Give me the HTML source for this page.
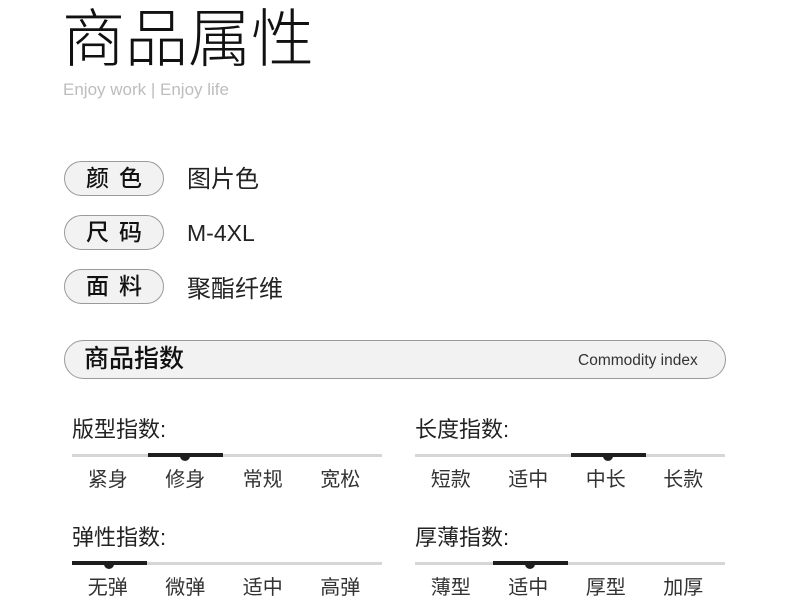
<!DOCTYPE html>
<html><head><meta charset="utf-8"><style>
*{margin:0;padding:0;box-sizing:border-box}
body{width:790px;height:614px;background:#fff;position:relative;overflow:hidden;font-family:"Liberation Sans","Noto Sans CJK SC",sans-serif;color:#222}
.a{position:absolute;white-space:nowrap}
.pill{position:absolute;left:64px;width:100px;height:35px;border:1px solid #9a9a9a;border-radius:18px;background:#f2f2f2;font-size:23px;font-weight:500;text-align:center;line-height:33px;letter-spacing:10px;padding-left:10px;color:#111}
.val{position:absolute;left:187px;font-size:24px;line-height:30px;color:#222}
.idx{position:absolute;width:310px;height:80px}
.idx .lbl{position:absolute;left:0;top:0;font-size:22px;line-height:26px;color:#222}
.idx .bar{position:absolute;left:0;top:37px;width:310px;height:3px;background:#d6d6d6}
.idx .on{position:absolute;top:36px;width:75px;height:4px;background:#1e1e1e}
.idx .on:after{content:"";position:absolute;left:32px;top:3px;width:10px;height:5px;border-radius:0 0 5px 5px;background:#1e1e1e}
.idx .opts{position:absolute;left:-3px;top:50px;width:310px;display:flex;font-size:20px;line-height:26px;color:#333}
.idx .opts span{flex:1;text-align:center}
</style></head><body>
<div class="a" style="left:62px;top:1px;font-size:63px;line-height:78px;color:#111;font-weight:300">商品属性</div>
<div class="a" style="left:63px;top:80px;font-size:17px;color:#bdbdbd">Enjoy work | Enjoy life</div>

<div class="pill" style="top:161px">颜色</div><div class="val" style="top:165px">图片色</div>
<div class="pill" style="top:215px">尺码</div><div class="val" style="top:218px;font-size:23px">M-4XL</div>
<div class="pill" style="top:269px">面料</div><div class="val" style="top:275px">聚酯纤维</div>

<div class="a" style="left:64px;top:340px;width:662px;height:39px;border:1px solid #9a9a9a;border-radius:20px;background:#f2f2f2"></div>
<div class="a" style="left:84px;top:344px;font-size:25px;font-weight:500;line-height:30px;color:#111">商品指数</div>
<div class="a" style="left:578px;top:351px;font-size:15.5px;line-height:20px;color:#333">Commodity index</div>

<div class="idx" style="left:72px;top:417px"><div class="lbl">版型指数:</div><div class="bar"></div><div class="on" style="left:76px"></div><div class="opts"><span>紧身</span><span>修身</span><span>常规</span><span>宽松</span></div></div>
<div class="idx" style="left:415px;top:417px"><div class="lbl">长度指数:</div><div class="bar"></div><div class="on" style="left:156px"></div><div class="opts"><span>短款</span><span>适中</span><span>中长</span><span>长款</span></div></div>
<div class="idx" style="left:72px;top:525px"><div class="lbl">弹性指数:</div><div class="bar"></div><div class="on" style="left:0"></div><div class="opts"><span>无弹</span><span>微弹</span><span>适中</span><span>高弹</span></div></div>
<div class="idx" style="left:415px;top:525px"><div class="lbl">厚薄指数:</div><div class="bar"></div><div class="on" style="left:78px"></div><div class="opts"><span>薄型</span><span>适中</span><span>厚型</span><span>加厚</span></div></div>
</body></html>
